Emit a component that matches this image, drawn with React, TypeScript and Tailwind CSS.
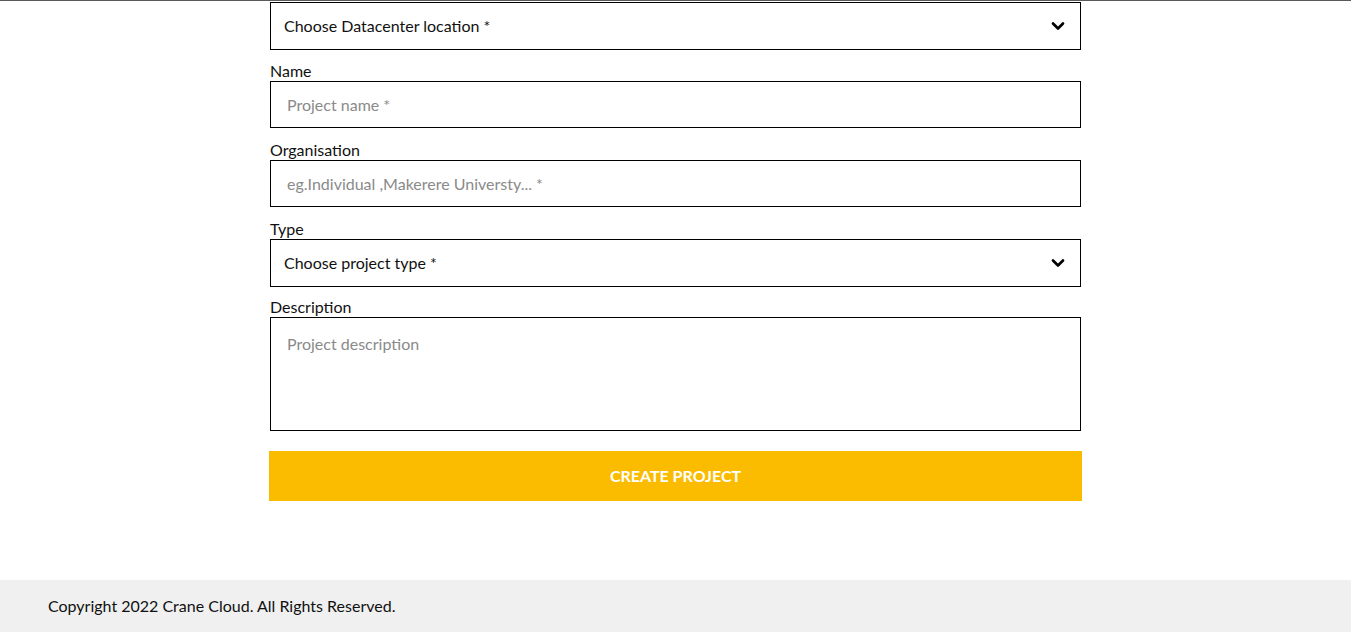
import { ChevronDown } from "lucide-react";

const font = { fontFamily: "Lato, 'Liberation Sans', sans-serif" };

function Label({ text, className = "mt-[11px]" }: { text: string; className?: string }) {
  return <label className={`${className} block h-5 text-[16px] leading-5 text-[#111]`}>{text}</label>;
}

function Select({ text }: { text: string }) {
  return (
    <div className="flex h-[48px] items-center justify-between border border-black bg-white pl-[13px] pr-[12px]">
      <span className="text-[16px] text-[#111]">{text}</span>
      <ChevronDown className="h-[20px] w-[20px] text-black" strokeWidth={3.2} />
    </div>
  );
}

function Input({ placeholder }: { placeholder: string }) {
  return (
    <input
      placeholder={placeholder}
      className="h-[47px] w-full border border-black px-4 text-[16px] outline-none placeholder:text-[#8a8a8a]"
    />
  );
}

export default function App() {
  return (
    <div className="flex min-h-[632px] flex-col bg-white" style={font}>
      <div className="h-px w-full bg-[#5a5a5a]" />
      <main className="flex-1">
        <form className="mx-auto mt-px flex w-[811px] flex-col">
          <Select text="Choose Datacenter location *" />
          <Label text="Name" />
          <Input placeholder="Project name *" />
          <Label text="Organisation" className="mt-3" />
          <Input placeholder="eg.Individual ,Makerere Universty... *" />
          <Label text="Type" className="mt-3" />
          <Select text="Choose project type *" />
          <Label text="Description" className="mt-[10px]" />
          <textarea
            placeholder="Project description"
            className="h-[114px] w-full resize-none border border-black px-4 py-[14px] text-[16px] outline-none placeholder:text-[#8a8a8a]"
          />
          <button
            type="button"
            className="-mx-px mt-5 h-[50px] bg-[#fbbc00] text-[16px] font-bold uppercase text-white"
          >
            Create project
          </button>
        </form>
      </main>
      <footer className="flex h-[52px] items-center bg-[#f0f0f0] px-12 text-[16px] text-[#111]">
        Copyright 2022 Crane Cloud. All Rights Reserved.
      </footer>
    </div>
  );
}
